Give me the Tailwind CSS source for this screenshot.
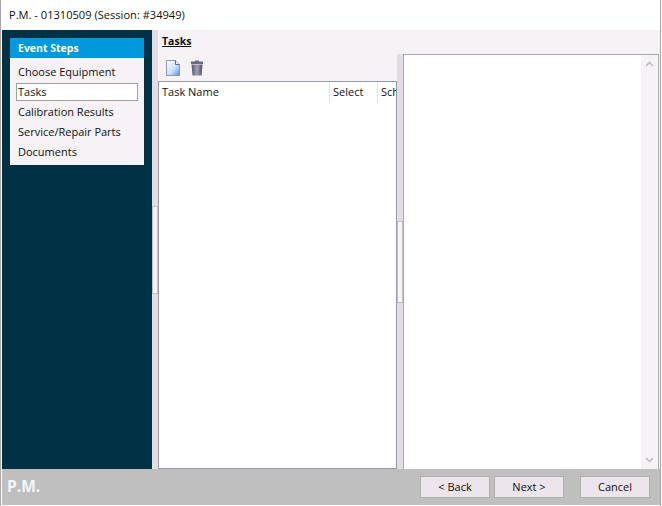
<!DOCTYPE html>
<html lang="en">
  <head>
    <meta charset="UTF-8" />
    <title>P.M.</title>
    <script src="https://cdn.jsdelivr.net/npm/@tailwindcss/browser@4"></script>
  </head>
  <body class="bg-white">
    <div class="w-[661px] h-[506px] flex flex-col overflow-hidden font-['Open_Sans','Noto_Sans',sans-serif] text-[11px] text-[#111] border-l border-l-[#a8a8a8] border-r border-r-[#a8a8a8] pl-px pb-px">
      <!-- title bar -->
      <div class="h-[30px] shrink-0 flex items-center pl-[7px] text-[11.1px] bg-white">P.M. - 01310509 (Session: #34949)</div>

      <!-- body -->
      <div class="flex-1 flex min-h-0">
        <!-- left nav -->
        <div class="w-[150px] shrink-0 bg-[#003145] pt-2 pl-2">
          <div class="w-[134px] h-[127px] bg-[#f6f2f6]">
            <div class="h-5 pt-px bg-[#0099dd] text-white text-[10.5px] font-bold flex items-center pl-2">Event Steps</div>
            <div class="pt-1 flex flex-col">
              <div class="h-5 flex items-center pl-2">Choose Equipment</div>
              <div class="h-[18px] my-px mx-1.5 w-[122px] bg-white border border-[#a0a0a0] flex items-center pl-px">Tasks</div>
              <div class="h-5 flex items-center pl-2">Calibration Results</div>
              <div class="h-5 flex items-center pl-2">Service/Repair Parts</div>
              <div class="h-5 flex items-center pl-2">Documents</div>
            </div>
          </div>
        </div>

        <!-- splitter -->
        <div class="w-1.5 shrink-0 bg-[#e3dce5] flex items-center">
          <div class="w-1.5 h-[88px] bg-[#f6f2f6] border border-[#c4c0c6]"></div>
        </div>

        <!-- content -->
        <div class="flex-1 min-w-0 bg-[#f6f2f6] flex flex-col">
          <div class="h-6 shrink-0 pl-1 flex items-center text-[10.5px] font-bold underline">Tasks</div>
          <div class="flex-1 min-h-0 flex pr-px">
            <!-- task list -->
            <div class="w-[239px] shrink-0 flex flex-col">
              <div class="h-[27px] shrink-0 flex items-center gap-[9px] pl-[7px]">
                <svg width="16" height="18" viewBox="0 0 16 18">
                  <defs>
                    <linearGradient id="page" x1="0" y1="0" x2="1" y2="1">
                      <stop offset="0" stop-color="#ffffff" />
                      <stop offset="0.55" stop-color="#cfe3fa" />
                      <stop offset="1" stop-color="#4f94e4" />
                    </linearGradient>
                  </defs>
                  <path d="M1.5 1.5H10.5L14.5 5.5V16.5H1.5Z" fill="url(#page)" stroke="#8f94c8" />
                  <path d="M10.5 1.5V5.5H14.5" fill="#eef4fc" stroke="#5a64b4" />
                </svg>
                <svg width="14" height="16" viewBox="0 0 14 16">
                  <defs>
                    <linearGradient id="can" x1="0" y1="0" x2="1" y2="0">
                      <stop offset="0" stop-color="#55566e" />
                      <stop offset="0.5" stop-color="#a0a1b6" />
                      <stop offset="1" stop-color="#4a4b62" />
                    </linearGradient>
                  </defs>
                  <path d="M5 0.5H9V1.5H13V4H1V1.5H5Z" fill="#6b6c80" />
                  <path d="M1.5 4.5H12.5L11.5 15.5H2.5Z" fill="url(#can)" />
                </svg>
              </div>
              <div class="flex-1 bg-white border border-[#9a9aa4] overflow-hidden">
                <div class="h-[21px] flex items-center whitespace-nowrap">
                  <div class="w-[171px] shrink-0 h-full flex items-center pl-[3px] border-r border-r-[#e5e5e5]">Task Name</div>
                  <div class="w-12 shrink-0 h-full flex items-center pl-[3px] border-r border-r-[#e5e5e5]">Select</div>
                  <div class="pl-[3px]">Sch</div>
                </div>
              </div>
            </div>

            <!-- splitter -->
            <div class="w-1.5 shrink-0 bg-[#e3dce5] flex items-center">
              <div class="w-1.5 h-[82px] bg-[#f6f2f6] border border-[#c4c0c6]"></div>
            </div>

            <!-- detail panel -->
            <div class="flex-1 min-w-0 bg-white border-t border-x border-[#a8a8b0] flex justify-end pr-px">
              <div class="w-4 bg-[#f6f2f6] flex flex-col justify-between items-center py-1.5">
                <svg width="9" height="6" viewBox="0 0 9 6"><path d="M1 5L4.5 1.5L8 5" fill="none" stroke="#c0bcc2" stroke-width="1.6" /></svg>
                <svg width="9" height="6" viewBox="0 0 9 6"><path d="M1 1L4.5 4.5L8 1" fill="none" stroke="#c0bcc2" stroke-width="1.6" /></svg>
              </div>
            </div>
          </div>
        </div>
      </div>

      <!-- footer -->
      <div class="h-9 shrink-0 bg-[#bfbfbf] flex items-center pl-[5px] pr-[10px]">
        <div class="text-[15.5px] font-bold text-[#f2f6fb]">P.M.</div>
        <div class="ml-auto flex text-[11px]">
          <button class="w-[70px] h-[22px] bg-[#ece6ec] border border-[#aeaeae]">&lt; Back</button>
          <button class="w-[70px] h-[22px] ml-1 bg-[#ece6ec] border border-[#aeaeae]">Next &gt;</button>
          <button class="w-[70px] h-[22px] ml-4 bg-[#ece6ec] border border-[#aeaeae]">Cancel</button>
        </div>
      </div>
    </div>
  </body>
</html>
